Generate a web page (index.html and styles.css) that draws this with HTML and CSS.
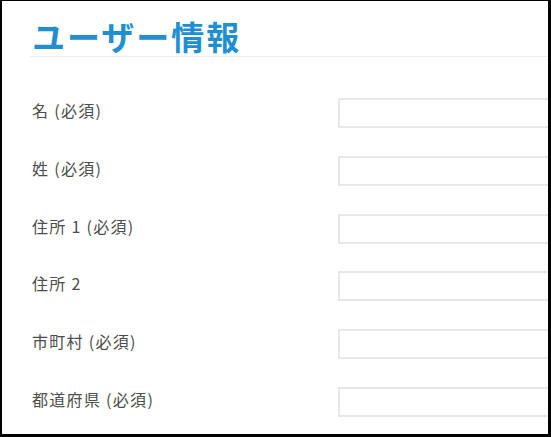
FILE: index.html
```html
<!DOCTYPE html>
<html lang="ja">
<head>
  <meta charset="UTF-8" />
  <meta name="viewport" content="width=device-width, initial-scale=1.0" />
  <title>ユーザー情報</title>
  <link rel="stylesheet" href="styles.css">
</head>
<body>
  <div class="frame">
    <h1 class="title">ユーザー情報</h1>
    <form class="user-form">
      <div class="row">
        <label for="first-name">名 (必須)</label>
        <input type="text" id="first-name" />
      </div>
      <div class="row">
        <label for="last-name">姓 (必須)</label>
        <input type="text" id="last-name" />
      </div>
      <div class="row">
        <label for="address1">住所 1 (必須)</label>
        <input type="text" id="address1" />
      </div>
      <div class="row">
        <label for="address2">住所 2</label>
        <input type="text" id="address2" />
      </div>
      <div class="row">
        <label for="city">市町村 (必須)</label>
        <input type="text" id="city" />
      </div>
      <div class="row">
        <label for="prefecture">都道府県 (必須)</label>
        <input type="text" id="prefecture" />
      </div>
    </form>
  </div>
</body>
</html>
```

FILE: styles.css
```css
* {
  box-sizing: border-box;
  padding: 0;
  margin: 0;
  font-family: 'Noto Sans CJK JP', 'Noto Sans', sans-serif;
}

body {
  background: #fff;
  width: 551px;
  height: 437px;
  overflow: hidden;
}

.frame {
  width: 551px;
  height: 437px;
  border-style: solid;
  border-color: #000;
  border-width: 1px 3px 3px 2px;
  overflow: hidden;
  background: #fff;
}

.title {
  margin-left: 28px;
  padding: 15px 0 0 2px;
  height: 56px;
  font-size: 33px;
  line-height: 40px;
  font-weight: 700;
  color: #1f8fd1;
  letter-spacing: 2px;
  border-bottom: 1px solid #eeeeee;
}

.user-form {
  padding-top: 41px;
}

.row {
  display: flex;
  align-items: flex-start;
  height: 57.8px;
  padding-left: 30px;
}

.row label {
  flex-shrink: 0;
  width: 306px;
  font-size: 16px;
  line-height: 25px;
  letter-spacing: 1.3px;
  color: #4d4d4d;
}

.row input {
  flex-shrink: 0;
  width: 400px;
  height: 30px;
  border: 2px solid #e8e8e8;
  background: #fff;
  outline: none;
}
```
